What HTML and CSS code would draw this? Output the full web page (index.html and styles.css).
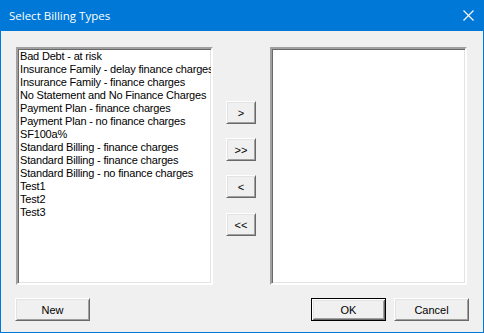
FILE: index.html
```html
<!DOCTYPE html>
<html lang="en">
<head>
    <meta charset="UTF-8">
    <title>Select Billing Types</title>
    <link rel="stylesheet" href="styles.css">
</head>
<body>
    <div class="dialog">
        <div class="title-bar">
            <span class="title">Select Billing Types</span>
            <svg class="close" width="11" height="11" viewBox="0 0 11 11">
                <path d="M0.5 0.5 L10.5 10.5 M10.5 0.5 L0.5 10.5" stroke="#fff" stroke-width="1.1" fill="none"/>
            </svg>
        </div>
        <div class="content">
            <div class="lists">
                <ul class="listbox">
                    <li>Bad Debt - at risk</li>
                    <li>Insurance Family - delay finance charges</li>
                    <li>Insurance Family - finance charges</li>
                    <li>No Statement and No Finance Charges</li>
                    <li>Payment Plan - finance charges</li>
                    <li>Payment Plan - no finance charges</li>
                    <li>SF100a%</li>
                    <li>Standard Billing - finance charges</li>
                    <li>Standard Billing - finance charges</li>
                    <li>Standard Billing - no finance charges</li>
                    <li>Test1</li>
                    <li>Test2</li>
                    <li>Test3</li>
                </ul>
                <div class="move-buttons">
                    <button class="btn small">&gt;</button>
                    <button class="btn small">&gt;&gt;</button>
                    <button class="btn small">&lt;</button>
                    <button class="btn small last">&lt;&lt;</button>
                </div>
                <ul class="listbox"></ul>
            </div>
            <div class="actions">
                <button class="btn new">New</button>
                <div class="spacer"></div>
                <button class="btn default">OK</button>
                <button class="btn">Cancel</button>
            </div>
        </div>
    </div>
</body>
</html>
```

FILE: styles.css
```css
body {
    margin: 0;
    font-family: 'Liberation Sans', Arial, sans-serif;
    font-size: 11px;
    background: #f0f0f0;
}

.dialog {
    width: 482px;
    height: 332px;
    border: 1px solid #0078d7;
    border-top: none;
    background: #f0f0f0;
}

.title-bar {
    height: 31px;
    background: #0078d7;
    display: flex;
    align-items: center;
    justify-content: space-between;
    padding: 0 9px 0 9px;
    margin: 0 -1px;
}

.title {
    font-family: 'Open Sans', 'Noto Sans', sans-serif;
    font-size: 11.5px;
    color: #fff;
    margin-top: -1px;
}

.close {
    margin-right: 1px;
    margin-top: -1px;
}

.content {
    padding: 16px 14px 0 15px;
}

.lists {
    display: flex;
    height: 238px;
}

.listbox {
    list-style: none;
    margin: 0;
    padding: 1px 2px;
    width: 189px;
    height: 232px;
    overflow: hidden;
    background: #fff;
    border: 2px solid;
    border-color: #a0a0a0 #fff #fff #a0a0a0;
    box-shadow: inset 1px 1px 0 #696969, inset -1px -1px 0 #e3e3e3;
    white-space: nowrap;
}

.listbox li {
    height: 13px;
    line-height: 13px;
    color: #000;
    letter-spacing: -0.18px;
}

.move-buttons {
    display: flex;
    flex-direction: column;
    gap: 14px;
    padding-top: 54px;
    margin: 0 14px 0 13px;
}

.move-buttons .last {
    margin-top: 1px;
}

.btn {
    font-family: 'Liberation Sans', Arial, sans-serif;
    font-size: 11px;
    color: #000;
    background: #f0f0f0;
    height: 23px;
    width: 75px;
    padding: 0;
    border: 1px solid;
    border-color: #fff #696969 #696969 #fff;
    box-shadow: inset 1px 1px 0 #e3e3e3, inset -1px -1px 0 #a0a0a0;
}

.btn.small {
    width: 30px;
}

.btn.new {
    margin-left: -1px;
}

.btn.default {
    border: 1px solid #000;
    box-shadow: inset 1px 1px 0 #fff, inset -1px -1px 0 #696969, inset 2px 2px 0 #e3e3e3, inset -2px -2px 0 #a0a0a0;
}

.actions {
    display: flex;
    margin-top: 13px;
    gap: 8px;
}

.spacer {
    flex: 1;
}
```
